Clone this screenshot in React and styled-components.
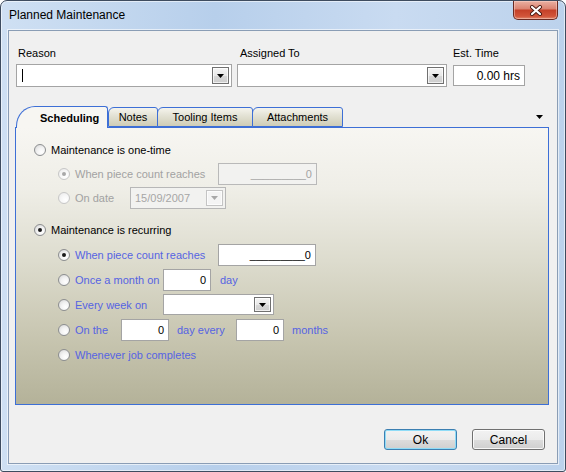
import React from 'react';
import styled, { createGlobalStyle } from 'styled-components';

const GlobalStyle = createGlobalStyle`
	html, body {
		margin: 0;
		padding: 0;
		background: #ffffff;
	}
	body {
		font-family: 'Liberation Sans', Arial, sans-serif;
		font-size: 11px;
		color: #000000;
	}
`;

const Window = styled.div`
	width: 566px;
	height: 472px;
	box-sizing: border-box;
	display: flex;
	flex-direction: column;
	border: 1px solid #3e4c5f;
	border-radius: 7px 7px 3px 3px;
	background: linear-gradient(to right, #cfe0f3 0%, #b7cfeb 38%, #c9dbf1 70%, #bcd2ec 100%);
	box-shadow: inset 0 0 0 1px rgba(255, 255, 255, 0.55);
	overflow: hidden;
`;

const TitleBar = styled.div`
	height: 29px;
	flex: none;
	display: flex;
	align-items: flex-start;
	padding: 0 7px 0 8px;
`;

const Title = styled.div`
	margin-top: 7px;
	font-size: 12px;
	line-height: 15px;
	color: #000000;
`;

const CloseButton = styled.div`
	margin-left: auto;
	width: 45px;
	height: 19px;
	box-sizing: border-box;
	border: 1px solid #6a2a22;
	border-top: none;
	border-radius: 0 0 5px 5px;
	background: linear-gradient(to bottom, #eab0a2 0%, #dc8573 42%, #c54129 52%, #d2553a 85%, #e08a6f 100%);
	box-shadow: inset 0 0 0 1px rgba(255, 220, 210, 0.45);
	display: flex;
	align-items: center;
	justify-content: center;
`;

const Client = styled.div`
	flex: 1;
	margin: 0 7px 7px 7px;
	background: #f0f0f0;
	border: 1px solid #8a9db5;
	box-shadow: 0 0 0 1px rgba(255, 255, 255, 0.6);
	display: flex;
	flex-direction: column;
	padding: 16px 0 0 0;
`;

const Fields = styled.div`
	display: flex;
	padding-left: 7px;
`;

const Field = styled.div`
	width: ${(p) => p.$w}px;
	margin-right: ${(p) => p.$gap || 0}px;
	display: flex;
	flex-direction: column;
`;

const FieldLabel = styled.div`
	line-height: 13px;
	margin-bottom: 4px;
	padding-left: ${(p) => p.$indent || 0}px;
`;

const ComboBox = styled.div`
	width: ${(p) => (p.$w ? `${p.$w}px` : '100%')};
	height: ${(p) => p.$h || 23}px;
	box-sizing: border-box;
	border: 1px solid ${(p) => (p.$disabled ? '#b7b7b7' : '#a4a4a4')};
	background: ${(p) => (p.$disabled ? '#f2f2f0' : '#ffffff')};
	display: flex;
	align-items: center;
	flex: none;
`;

const ComboText = styled.div`
	flex: 1;
	padding-left: 4px;
	color: ${(p) => (p.$disabled ? '#a6a6a6' : '#000000')};
	display: flex;
	align-items: center;
`;

const Caret = styled.span`
	display: inline-block;
	width: 1px;
	height: 13px;
	background: #000000;
	margin-left: 1px;
`;

const DropButton = styled.div`
	width: 17px;
	align-self: stretch;
	margin: 2px;
	box-sizing: border-box;
	border: 1px solid ${(p) => (p.$disabled ? '#c4c4c4' : '#707070')};
	background: ${(p) =>
		p.$disabled
			? '#f4f4f4'
			: 'linear-gradient(to bottom, #f4f4f4 0%, #e8e8e8 50%, #d8d8d8 51%, #cdcdcd 100%)'};
	box-shadow: inset 0 0 0 1px rgba(255, 255, 255, 0.7);
	display: flex;
	align-items: center;
	justify-content: center;
`;

const TextBox = styled.div`
	width: ${(p) => p.$w}px;
	height: ${(p) => p.$h || 22}px;
	box-sizing: border-box;
	flex: none;
	border: 1px solid ${(p) => (p.$disabled ? '#b9b9b9' : '#a4a4a4')};
	background: ${(p) => (p.$disabled ? '#f2f2f0' : '#ffffff')};
	color: ${(p) => (p.$disabled ? '#a3a3a3' : '#000000')};
	display: flex;
	align-items: center;
	justify-content: flex-end;
	padding-right: 4px;
	margin-top: ${(p) => p.$top || 0}px;
	white-space: pre;
	font-size: ${(p) => p.$size || 11}px;
`;

const TabStrip = styled.div`
	height: 21px;
	margin: 19px 8px 0 6px;
	display: flex;
	align-items: flex-end;
	position: relative;
	z-index: 1;
`;

const Tab = styled.div`
	height: ${(p) => (p.$active ? 22 : 20)}px;
	margin-bottom: ${(p) => (p.$active ? -1 : 0)}px;
	width: ${(p) => p.$w}px;
	box-sizing: border-box;
	margin-left: ${(p) => p.$ml || 0}px;
	position: relative;
	z-index: ${(p) => (p.$active ? 2 : 1)};
	border: 1px solid #3d6fd6;
	border-bottom: ${(p) => (p.$active ? 'none' : '1px solid #3d6fd6')};
	border-radius: ${(p) => (p.$active ? '19px 3px 0 0 / 20px 3px 0 0' : '6px 3px 0 0')};
	background: ${(p) =>
		p.$active ? '#f7f6f2' : 'linear-gradient(to bottom, #f5f4ed 0%, #e2e1d3 45%, #cfcdb6 100%)'};
	display: flex;
	align-items: center;
	justify-content: ${(p) => (p.$active ? 'flex-start' : 'center')};
	padding-left: ${(p) => (p.$active ? 23 : 0)}px;
	font-weight: ${(p) => (p.$active ? 'bold' : 'normal')};
	color: #000000;
`;

const TabMenu = styled.div`
	margin-left: auto;
	margin-right: 6px;
	align-self: center;
	display: flex;
`;

const Panel = styled.div`
	height: 278px;
	box-sizing: border-box;
	margin: 0 8px 0 6px;
	border: 1px solid #3d6fd6;
	background: linear-gradient(to bottom, #f7f6f2 0%, #efeee7 22%, #dddcce 48%, #c8c6b1 75%, #b4b299 100%);
	padding: 10px 0 0 18px;
`;

const Group = styled.div`
	margin-top: ${(p) => p.$top || 0}px;
`;

const Row = styled.div`
	height: ${(p) => p.$h || 24}px;
	display: flex;
	align-items: center;
	padding-left: ${(p) => p.$indent || 0}px;
`;

const Radio = styled.span`
	width: 12px;
	height: 12px;
	flex: none;
	box-sizing: border-box;
	border-radius: 50%;
	margin-right: 5px;
	border: 1px solid ${(p) => (p.$disabled ? '#c7c7c7' : '#8c8e90')};
	background: ${(p) =>
		p.$disabled
			? 'radial-gradient(circle at 65% 70%, #ffffff 0%, #f6f6f6 50%, #e6e6e6 100%)'
			: 'radial-gradient(circle at 65% 70%, #ffffff 0%, #f2f2f2 45%, #d2d2d2 100%)'};
	display: flex;
	align-items: center;
	justify-content: center;
	&::after {
		content: '';
		display: ${(p) => (p.$checked ? 'block' : 'none')};
		width: 4px;
		height: 4px;
		border-radius: 50%;
		background: ${(p) => (p.$disabled ? '#a8a8a8' : '#1a1a1a')};
	}
`;

const tones = {
	black: '#000000',
	blue: '#5664e2',
	gray: '#a2a2a2',
};

const Text = styled.span`
	color: ${(p) => tones[p.$tone || 'black']};
	width: ${(p) => (p.$w ? `${p.$w}px` : 'auto')};
	margin-left: ${(p) => p.$ml || 0}px;
	flex: none;
	white-space: nowrap;
`;

const Buttons = styled.div`
	display: flex;
	justify-content: flex-end;
	gap: 15px;
	margin: 24px 12px 0 0;
`;

const Button = styled.button`
	width: ${(p) => p.$w}px;
	height: 21px;
	box-sizing: border-box;
	font-family: 'Liberation Sans', Arial, sans-serif;
	font-size: 12px;
	color: #000000;
	border-radius: 3px;
	border: 1px solid ${(p) => (p.$default ? '#3c7fb1' : '#707070')};
	background: linear-gradient(to bottom, #f2f2f2 0%, #ebebeb 50%, #dddddd 51%, #cfcfcf 100%);
	box-shadow: inset 0 0 0 1px ${(p) => (p.$default ? '#8fdcf7' : 'rgba(255, 255, 255, 0.8)')};
	padding: 0;
`;

const Arrow = ({ color = '#000000' }) => (
	<svg width="7" height="4" viewBox="0 0 7 4">
		<path d="M0 0h7L3.5 4z" fill={color} />
	</svg>
);

const CloseGlyph = () => (
	<svg width="14" height="11" viewBox="0 0 14 11">
		<path d="M3 2l8 7M11 2l-8 7" stroke="#4a1a12" strokeWidth="4" strokeLinecap="round" />
		<path d="M3 2l8 7M11 2l-8 7" stroke="#ffffff" strokeWidth="2.2" strokeLinecap="round" />
	</svg>
);

export default () => (
	<>
		<GlobalStyle />
		<Window>
			<TitleBar>
				<Title>Planned Maintenance</Title>
				<CloseButton>
					<CloseGlyph />
				</CloseButton>
			</TitleBar>
			<Client>
				<Fields>
					<Field $w={216} $gap={5}>
						<FieldLabel $indent={2}>Reason</FieldLabel>
						<ComboBox>
							<ComboText>
								<Caret />
							</ComboText>
							<DropButton>
								<Arrow />
							</DropButton>
						</ComboBox>
					</Field>
					<Field $w={210} $gap={6}>
						<FieldLabel $indent={3}>Assigned To</FieldLabel>
						<ComboBox>
							<ComboText />
							<DropButton>
								<Arrow />
							</DropButton>
						</ComboBox>
					</Field>
					<Field $w={72}>
						<FieldLabel>Est. Time</FieldLabel>
						<TextBox $w={72} $h={21} $top={1} $size={12}>
							0.00 hrs
						</TextBox>
					</Field>
				</Fields>

				<TabStrip>
					<Tab $active $w={92} $ml={1}>
						Scheduling
					</Tab>
					<Tab $w={50}>Notes</Tab>
					<Tab $w={96} $ml={-1}>
						Tooling Items
					</Tab>
					<Tab $w={91} $ml={-1}>
						Attachments
					</Tab>
					<TabMenu>
						<Arrow />
					</TabMenu>
				</TabStrip>

				<Panel>
					<Group>
						<Row>
							<Radio />
							<Text>Maintenance is one-time</Text>
						</Row>
						<Row $indent={24}>
							<Radio $checked $disabled />
							<Text $tone="gray" $w={143}>
								When piece count reaches
							</Text>
							<TextBox $w={99} $disabled>
								_________0
							</TextBox>
						</Row>
						<Row $indent={24}>
							<Radio $disabled />
							<Text $tone="gray" $w={55}>
								On date
							</Text>
							<ComboBox $w={96} $h={22} $disabled>
								<ComboText $disabled>15/09/2007</ComboText>
								<DropButton $disabled>
									<Arrow color="#a8a8a8" />
								</DropButton>
							</ComboBox>
						</Row>
					</Group>

					<Group $top={8}>
						<Row>
							<Radio $checked />
							<Text>Maintenance is recurring</Text>
						</Row>
						<Row $indent={24} $h={25}>
							<Radio $checked />
							<Text $tone="blue" $w={143}>
								When piece count reaches
							</Text>
							<TextBox $w={98}>_________0</TextBox>
						</Row>
						<Row $indent={24} $h={25}>
							<Radio />
							<Text $tone="blue" $w={88}>
								Once a month on
							</Text>
							<TextBox $w={48}>0</TextBox>
							<Text $tone="blue" $ml={9}>
								day
							</Text>
						</Row>
						<Row $indent={24} $h={25}>
							<Radio />
							<Text $tone="blue" $w={88}>
								Every week on
							</Text>
							<ComboBox $w={111} $h={21}>
								<ComboText />
								<DropButton>
									<Arrow />
								</DropButton>
							</ComboBox>
						</Row>
						<Row $indent={24} $h={25}>
							<Radio />
							<Text $tone="blue" $w={46}>
								On the
							</Text>
							<TextBox $w={48}>0</TextBox>
							<Text $tone="blue" $ml={8} $w={59}>
								day every
							</Text>
							<TextBox $w={48}>0</TextBox>
							<Text $tone="blue" $ml={8}>
								months
							</Text>
						</Row>
						<Row $indent={24} $h={25}>
							<Radio />
							<Text $tone="blue">Whenever job completes</Text>
						</Row>
					</Group>
				</Panel>

				<Buttons>
					<Button $w={73} $default>
						Ok
					</Button>
					<Button $w={73}>Cancel</Button>
				</Buttons>
			</Client>
		</Window>
	</>
);
